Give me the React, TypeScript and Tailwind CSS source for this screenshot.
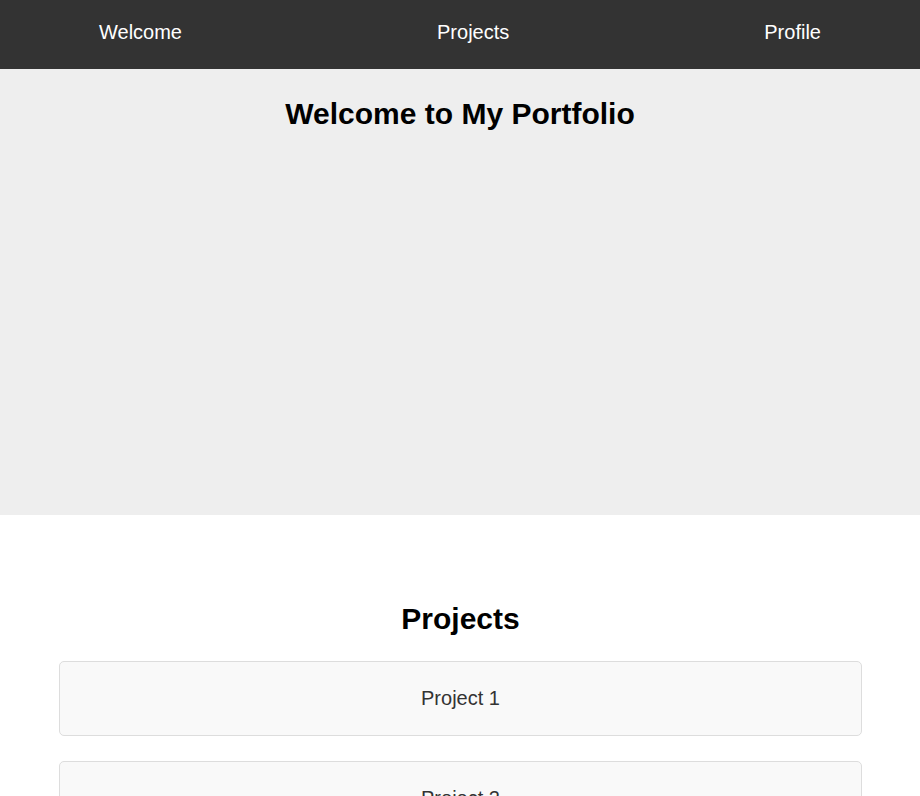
import * as React from "react";

const navLinks = ["Welcome", "Projects", "Profile"];
const projects = ["Project 1", "Project 2", "Project 3"];

export default function App() {
  return (
    <div className="min-h-screen bg-white font-['Liberation_Sans',Arial,sans-serif]">
      <nav className="h-[69px] bg-[#333333] pt-[21px]">
        <ul className="flex justify-between px-[99px]">
          {navLinks.map((link) => (
            <li key={link}>
              <a href="#" className="text-[20px] leading-[23px] text-white">
                {link}
              </a>
            </li>
          ))}
        </ul>
      </nav>

      <section className="h-[446px] bg-[#eeeeee] pt-[28px]">
        <h1 className="text-center text-[30px] font-bold leading-[34px] text-black">
          Welcome to My Portfolio
        </h1>
      </section>

      <section className="pl-[59px] pr-[58px] pt-[87px]">
        <h2 className="text-center text-[30px] font-bold leading-[34px] text-black">Projects</h2>
        <div className="mt-[25px] flex flex-col gap-[25px]">
          {projects.map((p) => (
            <div
              key={p}
              className="rounded-[5px] border border-[#dddddd] bg-[#f9f9f9] py-[25px] text-center text-[20px] leading-[23px] text-[#333333]"
            >
              {p}
            </div>
          ))}
        </div>
      </section>
    </div>
  );
}
